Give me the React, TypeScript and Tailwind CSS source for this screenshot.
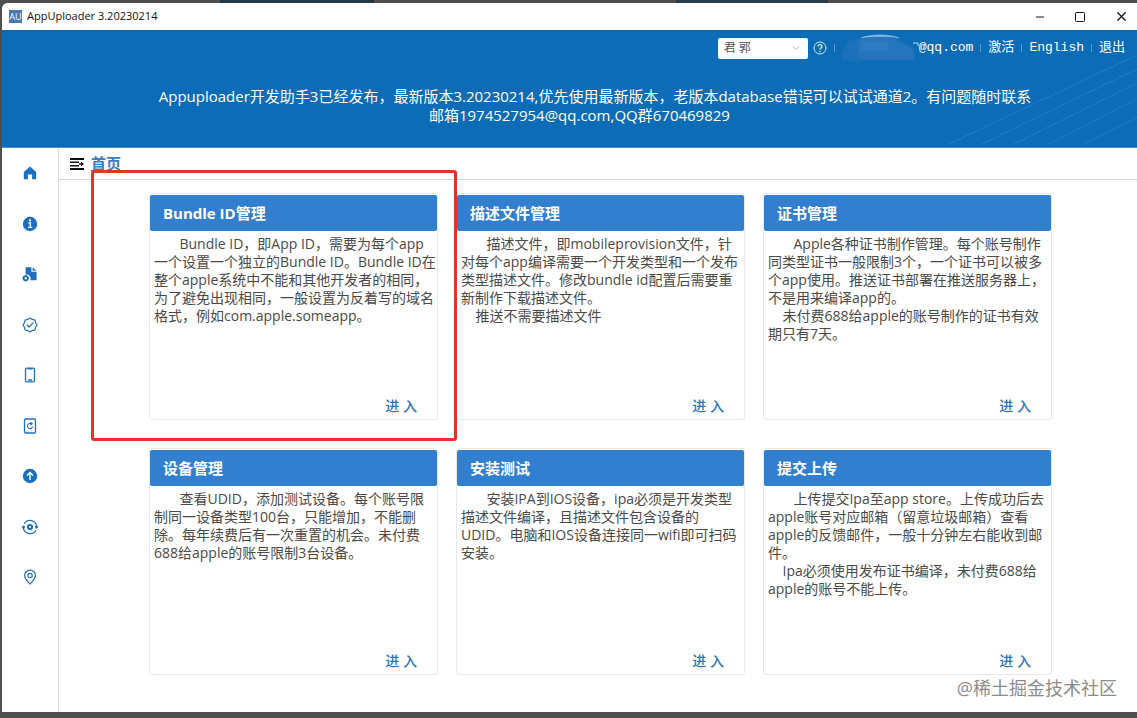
import type { ReactNode } from 'react';
import { ChevronDown, Minus, Square, X } from 'lucide-react';

type Card = { title: string; lines: string[] };

const cards: Card[] = [
  {
    title: 'Bundle ID管理',
    lines: [
      '       Bundle ID，即App ID，需要为每个app',
      '一个设置一个独立的Bundle ID。Bundle ID在',
      '整个apple系统中不能和其他开发者的相同，',
      '为了避免出现相同，一般设置为反着写的域名',
      '格式，例如com.apple.someapp。',
    ],
  },
  {
    title: '描述文件管理',
    lines: [
      '       描述文件，即mobileprovision文件，针',
      '对每个app编译需要一个开发类型和一个发布',
      '类型描述文件。修改bundle id配置后需要重',
      '新制作下载描述文件。',
      '    推送不需要描述文件',
    ],
  },
  {
    title: '证书管理',
    lines: [
      '       Apple各种证书制作管理。每个账号制作',
      '同类型证书一般限制3个，一个证书可以被多',
      '个app使用。推送证书部署在推送服务器上，',
      '不是用来编译app的。',
      '    未付费688给apple的账号制作的证书有效',
      '期只有7天。',
    ],
  },
  {
    title: '设备管理',
    lines: [
      '       查看UDID，添加测试设备。每个账号限',
      '制同一设备类型100台，只能增加，不能删',
      '除。每年续费后有一次重置的机会。未付费',
      '688给apple的账号限制3台设备。',
    ],
  },
  {
    title: '安装测试',
    lines: [
      '       安装IPA到IOS设备，ipa必须是开发类型',
      '描述文件编译，且描述文件包含设备的',
      'UDID。电脑和IOS设备连接同一wifi即可扫码',
      '安装。',
    ],
  },
  {
    title: '提交上传',
    lines: [
      '       上传提交Ipa至app store。上传成功后去',
      'apple账号对应邮箱（留意垃圾邮箱）查看',
      'apple的反馈邮件，一般十分钟左右能收到邮',
      '件。',
      '    Ipa必须使用发布证书编译，未付费688给',
      'apple的账号不能上传。',
    ],
  },
];

/* Sidebar glyphs, all on a 16x16 grid */
const navItems: { label: string; icon: ReactNode }[] = [
  {
    label: '首页',
    icon: <path d="M8 1.6 14.2 7v6.4a.9.9 0 0 1-.9.9h-3.2V9.6H5.9v4.7H2.7a.9.9 0 0 1-.9-.9V7z" fill="currentColor" />,
  },
  {
    label: '关于',
    icon: (
      <>
        <circle cx="8" cy="8" r="7.2" fill="currentColor" />
        <path d="M6.3 6.9h2v4.3M6 11.4h4.2" fill="none" stroke="#fff" strokeWidth="1.3" />
        <circle cx="8" cy="4.4" r="1.1" fill="#fff" />
      </>
    ),
  },
  {
    label: '描述文件',
    icon: (
      <>
        <path d="M4.4 1.2h5v4.6h5.2v7.6a.8.8 0 0 1-.8.8H8.4a4 4 0 0 0-4.8-5.5V2a.8.8 0 0 1 .8-.8z" fill="currentColor" />
        <path d="M10.6 1.2 14.4 4.7h-3.8z" fill="currentColor" />
        <circle cx="3.7" cy="12.2" r="2.1" fill="none" stroke="currentColor" strokeWidth="1.7" />
        <path d="M3.7 9v1M3.7 14.4v1M.5 12.2h1M6 12.2h1" stroke="currentColor" strokeWidth="1.2" />
      </>
    ),
  },
  {
    label: '证书',
    icon: (
      <g fill="none" stroke="currentColor" strokeWidth="1.2" strokeLinejoin="round">
        <path d="M8 1 10.3 2.4 12.9 3.1 13.6 5.700 15 8 13.6 10.3 12.9 12.900 10.3 13.6 8 15 5.700 13.6 3.100 12.9 2.400 10.3 1 8 2.400 5.700 3.100 3.100 5.700 2.400z" />
        <path d="m5.2 8 2 2.1 3.8-4.3" strokeLinecap="round" />
      </g>
    ),
  },
  {
    label: '设备',
    icon: (
      <g fill="none" stroke="currentColor" strokeWidth="1.3">
        <rect x="3.5" y="1.2" width="9" height="13.6" rx="1.4" />
        <path d="M5.6 1.8h4.8M6 13h4" />
      </g>
    ),
  },
  {
    label: '安装',
    icon: (
      <g fill="none" stroke="currentColor" strokeWidth="1.3">
        <rect x="2.5" y="1" width="11" height="14" rx="1.2" />
        <path d="M9.6 5.9A2.6 2.6 0 1 0 10.6 8.5M8.2 4.2l2 1.5-1.9 1.6" strokeWidth="1.1" />
      </g>
    ),
  },
  {
    label: '上传',
    icon: (
      <>
        <circle cx="8" cy="8" r="7.2" fill="currentColor" />
        <path d="M8 12V4.8M5 7.6l3-3 3 3" fill="none" stroke="#fff" strokeWidth="1.4" />
      </>
    ),
  },
  {
    label: '设置',
    icon: (
      <g fill="none" stroke="currentColor">
        <path d="M2.2 4.8A6.6 6.6 0 0 1 14.6 8M13.8 11.2A6.6 6.6 0 0 1 1.4 8" strokeWidth="1.2" />
        <circle cx="8" cy="8" r="2.1" strokeWidth="2" />
        <circle cx="1.5" cy="8" r="1.5" fill="currentColor" stroke="none" />
        <circle cx="14.5" cy="8" r="1.5" fill="currentColor" stroke="none" />
      </g>
    ),
  },
  {
    label: '定位',
    icon: (
      <g fill="none" stroke="currentColor" strokeWidth="1.2">
        <path d="M8 15c-1.4-1.4-5.4-5-5.4-8.4a5.4 5.4 0 0 1 10.8 0C13.4 10 9.4 13.6 8 15z" />
        <circle cx="8" cy="6.5" r="2.2" />
      </g>
    ),
  },
];

function Divider() {
  return <span className="h-2 w-px bg-white/30" />;
}

function TitleBar() {
  return (
    <div className="flex h-[27px] items-center bg-white pr-2 pl-[7px]">
      <span className="flex h-[13px] w-[13px] items-center justify-center bg-[#4478b8] text-[9px] leading-none text-white">
        AU
      </span>
      <span className="ml-[5px] text-[11px] text-[#111]">AppUploader 3.20230214</span>
      <div className="ml-auto flex items-center gap-7 text-[#111]">
        <button aria-label="最小化"><Minus size={12} strokeWidth={2} /></button>
        <button aria-label="最大化"><Square size={12} strokeWidth={2} /></button>
        <button aria-label="关闭"><X size={15} strokeWidth={2} /></button>
      </div>
    </div>
  );
}

function Header() {
  return (
    <header className="relative flex h-[118px] flex-col border-b border-[#4a93cc] bg-[#0d6cb8] text-white">
      <svg className="absolute right-0 bottom-0 h-[92px] w-[200px]" viewBox="0 0 200 92" fill="none" stroke="#ffffff" strokeOpacity="0.1">
        <path d="M12 89 200 0M45 89 200 14M77 89 200 28M112 89 200 44M148 89 200 62" />
      </svg>

      <div className="relative flex h-9 items-center justify-end gap-[7px] pr-3 font-['Liberation_Mono','Noto_Sans_CJK_SC',monospace] text-[13px]">
        <div className="relative h-[21px] w-[90px] text-[#555]">
          <select
            aria-label="账号"
            className="h-full w-full appearance-none rounded-xs bg-white pl-1.5 font-['Open_Sans','Noto_Sans_CJK_SC',sans-serif] text-[12px] leading-none"
          >
            <option>君 郭</option>
          </select>
          <ChevronDown size={12} strokeWidth={1.5} className="pointer-events-none absolute top-1 right-1.5 text-gray-400" />
        </div>
        <button aria-label="帮助" className="-ml-0.5">
          <svg className="h-[14px] w-[14px]" viewBox="0 0 14 14" fill="none" stroke="#cfe9f3">
            <circle cx="7" cy="7" r="6" />
            <path d="M5 5.6C5 3 9 3 9 5.4 9 7 7 6.8 7 8.6M7 9.8v1.2" stroke="#d9f0a8" strokeWidth="1.3" />
          </svg>
        </button>
        <Divider />
        <div className="flex items-center">
          {/* hidden part of the mail address */}
          <svg className="h-7 w-[77px]" viewBox="0 0 77 28">
            <g className="blur-[1px]">
              <path d="M6 7 18 4V27H0V20z" fill="#1b71bb" />
              <path d="M16 6C22 2 30 2 38 2s16 2 22 6l12 7v11H16z" fill="#2475be" />
              <path d="M19 7h27v9H19z" fill="#2f7cc2" />
            </g>
            <path d="M19 4C27 0 49 0 57 4 49 2 27 2 19 4z" fill="#8fbfe4" stroke="#8fbfe4" strokeWidth="0.5" />
            <path d="M71 9h5v3" fill="none" stroke="#b9d6ee" />
          </svg>
          <span>@qq.com</span>
        </div>
        <Divider />
        <a href="#activate">激活</a>
        <Divider />
        <a href="#english">English</a>
        <Divider />
        <a href="#logout">退出</a>
      </div>

      <p className="relative mt-[21px] pl-[51px] text-center text-[15px] leading-[19px]">
        Appuploader开发助手3已经发布，最新版本3.20230214,优先使用最新版本，老版本database错误可以试试通道2。有问题随时联系
        <br />
        邮箱1974527954@qq.com,QQ群670469829{'\u00a0'.repeat(8)}
      </p>
    </header>
  );
}

function Sidebar() {
  return (
    <nav className="w-[57px] shrink-0 border-r border-[#dcdfe2] pt-[15px]">
      <div className="flex h-[424px] flex-col items-center justify-between text-[#1f6fbf]">
        {navItems.map(({ label, icon }) => (
          <a key={label} href="#" aria-label={label} className="flex h-5 w-5 items-center justify-center">
            <svg viewBox="0 0 16 16" className="h-4 w-4">{icon}</svg>
          </a>
        ))}
      </div>
    </nav>
  );
}

function FeatureCard({ title, lines }: Card) {
  return (
    <section className="flex h-[227px] flex-col rounded-[3px] border border-[#e6e9ec] pt-px">
      <h2 className="flex h-9 shrink-0 items-center rounded-xs bg-[#327ecf] px-[13px] text-[15px] font-bold text-white">
        {title}
      </h2>
      <p className="mt-1 pl-1 text-[14px] leading-[18px] whitespace-pre text-[#4a4a4a]">{lines.join('\n')}</p>
      <a href="#enter" className="mt-auto mr-5 mb-1 self-end text-[14px] leading-[18px] font-medium text-[#2f74bd]">
        进 入
      </a>
    </section>
  );
}

export default function App() {
  return (
    <div className="relative flex min-h-screen flex-col bg-[#4f4f4f] pb-1.5 pl-0.5 font-['Open_Sans','Noto_Sans_CJK_SC',sans-serif]">
      <div className="flex h-[3px] shrink-0">
        <span className="ml-[218px] w-[154px] bg-[#263a46]" />
        <span className="ml-[302px] w-[152px] bg-[#2d3d4c]" />
      </div>

      <div className="flex flex-1 flex-col overflow-hidden rounded-tl-md bg-white">
        <TitleBar />
        <Header />

        <div className="flex flex-1">
          <Sidebar />

          <main className="min-w-0 flex-1">
            <div className="flex h-8 items-center gap-1.5 border-b border-[#d5d8db] pl-2.5">
              <button aria-label="折叠菜单">
                <svg viewBox="0 0 16 14" className="h-[14px] w-4" fill="#111">
                  <path d="M1 1h14v2H1zM1 11h14v2H1zM1 4.5h9v1.500H1zM1 8h9v1.500H1zM10 6.200h2V4.400L15 7l-3 2.600V7.800h-2z" />
                </svg>
              </button>
              <a href="#home" className="text-[15px] font-bold text-[#3a7cc8] underline">首页</a>
            </div>

            <div className="relative grid grid-cols-3 gap-x-[18px] gap-y-7 pt-[13px] pr-[85px] pb-[37px] pl-[90px]">
              {cards.map((card) => (
                <FeatureCard key={card.title} {...card} />
              ))}

              {/* highlight around the first card */}
              <div className="pointer-events-none absolute -top-[10px] left-8 h-[271px] w-[366px] rounded-[3px] border-3 border-[#e5332a]" />
            </div>
          </main>
        </div>
      </div>

      <span className="absolute right-5 bottom-4 text-[18px] text-[#8c8c8c]">@稀土掘金技术社区</span>
    </div>
  );
}
